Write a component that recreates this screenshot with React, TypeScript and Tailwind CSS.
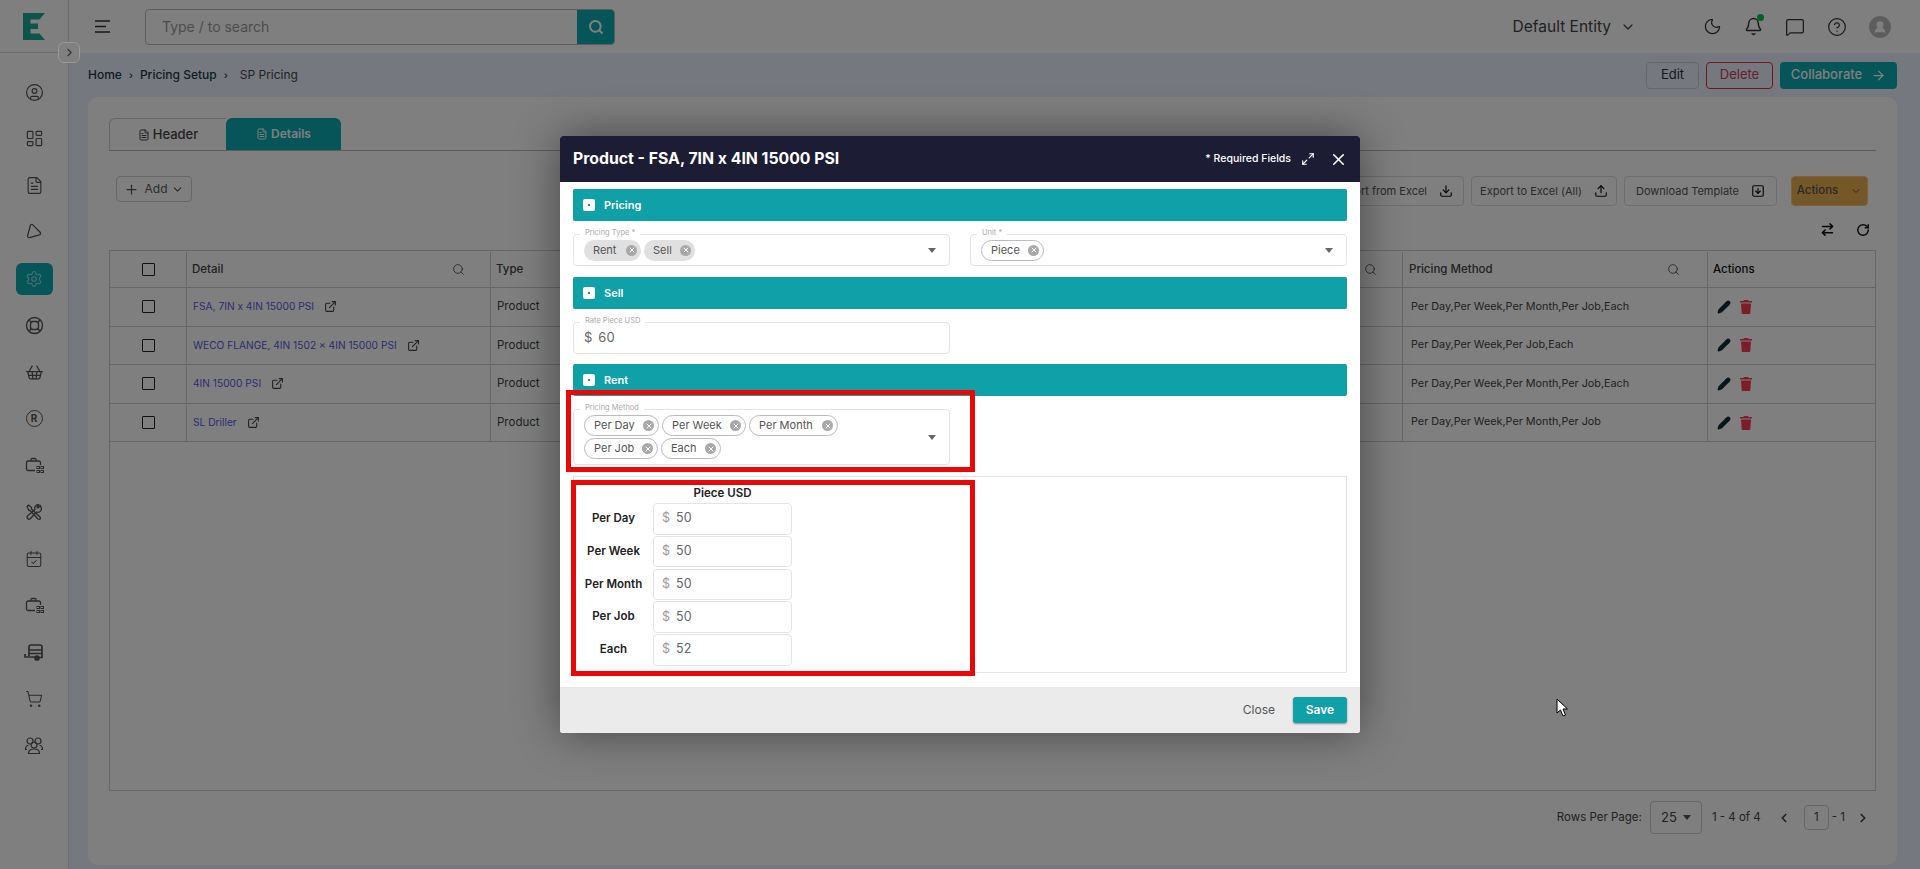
import React from 'react';
import {
  ArrowRightLeft, ArrowRight, Bell, CalendarCheck, ChevronDown, ChevronLeft, ChevronRight,
  CircleHelp, CircleUser, Download, ExternalLink, FileText, LayoutDashboard, Maximize2, MessageSquare,
  Moon, Play, Plus, RotateCw, Search, Settings, ShoppingBasket, ShoppingCart, SquareArrowDown, Pencil, Upload,
  X, UserRound,
} from 'lucide-react';

const BriefcaseGrid: React.FC = () => (
  <svg width="19" height="19" viewBox="0 0 19 19" fill="none" stroke="currentColor" strokeWidth="1.3">
    <path d="M10 14.500H3a1.500 1.500 0 0 1-1.500-1.500V6.500A1.500 1.500 0 0 1 3 5h11a1.500 1.500 0 0 1 1.500 1.500V9" />
    <path d="M6 5V3.500A1 1 0 0 1 7 2.500h3a1 1 0 0 1 1 1V5" />
    <rect x="12" y="10.500" width="2.500" height="2" strokeWidth="1" />
    <rect x="16" y="10.500" width="2.500" height="2" strokeWidth="1" />
    <rect x="12" y="14.500" width="2.500" height="2" strokeWidth="1" />
    <rect x="16" y="14.500" width="2.500" height="2" strokeWidth="1" />
  </svg>
);

const Tools: React.FC = () => (
  <svg width="18" height="18" viewBox="0 0 18 18" fill="none" stroke="currentColor" strokeWidth="1.3" strokeLinejoin="round">
    <path d="M2 3.500 3.500 2l3 2.500v1.500l8.500 8 .5 1.500-1 1-1.500-.5-8-8.500H4z" />
    <path d="M15.500 2.500 13 5l-1-1 2-2.200a3.500 3.500 0 0 0-4 4.700L2.500 13a2 2 0 0 0 2.500 3l6.500-7a3.500 3.500 0 0 0 4-5.500z" />
  </svg>
);

const Buoy: React.FC = () => (
  <svg width="19" height="19" viewBox="0 0 19 19" fill="none" stroke="currentColor" strokeWidth="1.4">
    <circle cx="9.500" cy="9.500" r="8" />
    <rect x="5.500" y="5.500" width="8" height="8" rx="2.500" />
    <path d="M4 4l2 2M15 4l-2 2M4 15l2-2M15 15l-2-2" />
  </svg>
);

const Trailer: React.FC = () => (
  <svg width="20" height="19" viewBox="0 0 20 19" fill="none" stroke="currentColor" strokeWidth="1.700">
    <path d="M5 13V4a2 2 0 0 1 2-2h9a2 2 0 0 1 2 2v10.500h-3" />
    <path d="M5 7h13M5 10.500h13" strokeWidth="1.400" />
    <path d="M1 11v3h10.500" />
    <circle cx="13" cy="15" r="2" fill="currentColor" />
  </svg>
);

const People: React.FC = () => (
  <svg width="20" height="19" viewBox="0 0 20 19" fill="none" stroke="currentColor" strokeWidth="1.200">
    <circle cx="6" cy="5" r="3" />
    <circle cx="14" cy="5" r="3" />
    <circle cx="10" cy="9" r="3" />
    <path d="M3 13.500H1.500c0-2.500 1-4 3-4.500M17 13.500h1.500c0-2.500-1-4-3-4.500" />
    <path d="M4.500 17.500c0-3 2-4.500 5.500-4.500s5.500 1.500 5.500 4.500z" />
  </svg>
);

const SolidTrash: React.FC = () => (
  <svg width="12" height="14" viewBox="0 0 12 14" fill="#f83c50">
    <path d="M4 0h4l.6 1H12v1.500H0V1h3.400zM1 3.500h10L10.300 13a1 1 0 0 1-1 1H2.700a1 1 0 0 1-1-1z" />
  </svg>
);

const sideIcons: React.ReactNode[] = [
  <CircleUser size={19} strokeWidth={1.5} />,
  <LayoutDashboard size={19} strokeWidth={1.5} />,
  <FileText size={19} strokeWidth={1.5} />,
  <Play size={18} strokeWidth={1.7} className="rotate-[15deg]" />,
  <Settings size={18} strokeWidth={1.5} />,
  <Buoy />,
  <ShoppingBasket size={19} strokeWidth={1.6} />,
  <span className="flex h-[17px] w-[17px] items-center justify-center rounded-full border-[1.5px] border-current text-[10px] font-bold">R</span>,
  <BriefcaseGrid />,
  <Tools />,
  <CalendarCheck size={18} strokeWidth={1.4} />,
  <BriefcaseGrid />,
  <Trailer />,
  <ShoppingCart size={18} strokeWidth={1.4} />,
  <People />,
];

const rows = [
  { detail: 'FSA, 7IN x 4IN 15000 PSI', method: 'Per Day,Per Week,Per Month,Per Job,Each' },
  { detail: 'WECO FLANGE, 4IN 1502 x 4IN 15000 PSI', method: 'Per Day,Per Week,Per Job,Each' },
  { detail: '4IN 15000 PSI', method: 'Per Day,Per Week,Per Month,Per Job,Each' },
  { detail: 'SL Driller', method: 'Per Day,Per Week,Per Month,Per Job' },
];

const gridCols = 'grid grid-cols-[77px_304px_300px_612px_305px_1fr]';

const Sidebar: React.FC = () => (
  <aside className="flex w-[69px] shrink-0 flex-col border-r border-[#dcdcdc] bg-white">
    <div className="flex h-[53px] items-center border-b border-[#dcdcdc] pl-[23px]">
      <svg width="22" height="27" viewBox="0 0 22 27">
        <path d="M0 0H22L16.500 6.500H7.500V10.500H15V16H7.500V20.500H16.500L22 27H0Z" fill="#1aa895" />
      </svg>
    </div>
    <div className="flex flex-col items-center pt-[23px]">
      {sideIcons.map((icon, i) => (
        <div
          key={i}
          className={`flex h-[32px] w-[37px] items-center justify-center rounded-md ${i === 4 ? 'bg-[#0caab0] text-[#8ee3e6]' : 'text-[#555]'} ${i === 14 ? '' : 'mb-[14.700px]'}`}
        >
          {icon}
        </div>
      ))}
    </div>
  </aside>
);

const Header: React.FC = () => (
  <header className="flex h-[53px] items-center bg-white pl-[26px] pr-[29px]">
    <svg width="15" height="13" viewBox="0 0 15 13" stroke="#333" strokeWidth="1.600">
      <path d="M0 1h15M0 6.500h11M0 12h15" />
    </svg>
    <div className="ml-[35px] flex h-[36px] w-[470px] items-center justify-between overflow-hidden rounded border border-[#bbb]">
      <span className="pl-4 text-[14px] text-[#999]">Type / to search</span>
      <span className="flex h-full w-[37px] items-center justify-center bg-[#0caab0] text-white">
        <Search size={16} strokeWidth={3} />
      </span>
    </div>
    <div className="ml-auto flex items-center gap-[9px] text-[15.500px] text-[#444]">
      Default Entity
      <ChevronDown size={16} />
    </div>
    <div className="ml-[67px] flex items-center gap-[22px] text-[#333]">
      <Moon size={19} strokeWidth={1.5} />
      <span className="relative">
        <Bell size={19} strokeWidth={1.8} />
        <span className="absolute right-[-1px] top-[-3px] h-[7px] w-[7px] rounded-full bg-[#11b84a]" />
      </span>
      <MessageSquare size={20} strokeWidth={1.5} />
      <CircleHelp size={20} strokeWidth={1.5} />
      <span className="flex h-[22px] w-[22px] items-center justify-center rounded-full bg-[#bbb] text-white">
        <UserRound size={14} fill="currentColor" />
      </span>
    </div>
  </header>
);

const ToolButton: React.FC<{ label: string; width: string; icon: React.ReactNode }> = ({ label, width, icon }) => (
  <button className={`flex h-[30px] items-center justify-center gap-3 rounded border border-[#ddd] text-[11px] text-[#555] ${width}`}>
    {label}
    {icon}
  </button>
);

const Breadcrumb: React.FC = () => (
  <div className="flex h-[44px] items-center justify-between pl-[19px] pr-[23px]">
    <div className="flex items-center gap-[7px] text-[12px] font-medium text-[#1b3a4a]">
      <span>Home</span>
      <span className="text-[10px]">›</span>
      <span>Pricing Setup</span>
      <span className="text-[10px]">›</span>
      <span className="ml-[5px] font-normal text-[#444]">SP Pricing</span>
    </div>
    <div className="flex items-center gap-[7px] text-[13px]">
      <button className="h-[27px] w-[53px] rounded border border-[#ccc] text-[#333]">Edit</button>
      <button className="h-[27px] w-[67px] rounded border border-[#e03030] text-[#c84058]">Delete</button>
      <button className="flex h-[27px] w-[117px] items-center justify-center gap-[9px] rounded bg-[#0caab0] font-medium text-white">
        Collaborate
        <ArrowRight size={15} />
      </button>
    </div>
  </div>
);

const DataTable: React.FC = () => (
  <div className="mx-[21px] mt-[44px] flex h-[541px] flex-col border border-[#ccc] text-[11.500px] text-[#444]">
    <div className={`${gridCols} h-[37px] border-b border-[#ccc] pt-[1px] font-medium`}>
      <div className="flex items-center justify-center border-r border-[#ccc]">
        <span className="h-[13px] w-[13px] rounded-[1px] border-[1.5px] border-[#222]" />
      </div>
      <div className="flex items-center justify-between border-r border-[#ccc] pl-[5px] pr-[25px]">
        Detail
        <Search size={13} strokeWidth={1.5} />
      </div>
      <div className="flex items-center pl-[5px]">Type</div>
      <div className="flex items-center justify-end border-r border-[#ccc] pr-[25px]">
        <Search size={13} strokeWidth={1.5} />
      </div>
      <div className="flex items-center justify-between border-r border-[#ccc] pl-[6px] pr-[27px]">
        Pricing Method
        <Search size={13} strokeWidth={1.5} />
      </div>
      <div className="flex items-center pl-[5px] text-[#111]">Actions</div>
    </div>
    {rows.map(row => (
      <div key={row.detail} className={`${gridCols} h-[38.600px] border-b border-[#ccc]`}>
        <div className="flex items-center justify-center border-r border-[#ccc]">
          <span className="h-[13px] w-[13px] rounded-[1px] border-[1.5px] border-[#222]" />
        </div>
        <div className="flex items-center gap-[10px] border-r border-[#ccc] pl-[6px] text-[10.200px] text-[#5a5ae0]">
          {row.detail}
          <ExternalLink size={13} className="text-[#444]" />
        </div>
        <div className="flex items-center pl-[6px]">Product</div>
        <div className="border-r border-[#ccc]" />
        <div className="flex items-center border-r border-[#ccc] pl-[8px] text-[10.800px]">{row.method}</div>
        <div className="flex items-center gap-[9px] pl-[9px]">
          <Pencil size={14} fill="#0d2a33" className="text-[#0d2a33]" />
          <SolidTrash />
        </div>
      </div>
    ))}
  </div>
);

const Pagination: React.FC = () => (
  <div className="flex items-center justify-end gap-[8px] pr-[27px] pt-[10px] text-[11.500px] text-[#444]">
    <span>Rows Per Page:</span>
    <span className="flex h-[33px] w-[52px] items-center justify-center gap-[6px] rounded border border-[#ccc] text-[13px]">
      25 <span className="h-0 w-0 border-x-4 border-t-[5px] border-x-transparent border-t-[#555]" />
    </span>
    <span className="ml-[2px]">1 - 4 of 4</span>
    <ChevronLeft size={14} strokeWidth={3} className="ml-[8px]" />
    <span className="ml-[5px] flex h-[25px] w-[25px] items-center justify-center rounded border border-[#ccc]">1</span>
    <span className="-ml-[5px]">- 1</span>
    <ChevronRight size={14} strokeWidth={3} className="ml-[3px]" />
  </div>
);

const Page: React.FC = () => (
  <main className="flex min-w-0 flex-1 flex-col bg-[#ecf0ff]">
    <Header />
    <Breadcrumb />
    <section className="ml-[19px] mr-[23px] h-[768px] rounded-[10px] bg-white pt-[21px]">
      <div className="mx-[21px] flex h-[33px] border-b border-[#bbb]">
        <div className="flex w-[117px] items-center justify-center gap-[3px] rounded-tl-md border-l border-t border-[#ccc] text-[13px] font-medium text-[#444]">
          <FileText size={12} /> Header
        </div>
        <div className="flex w-[115px] items-center justify-center gap-[3px] rounded-t-md bg-[#0caab0] text-[12px] font-semibold text-white">
          <FileText size={12} /> Details
        </div>
      </div>
      <div className="mt-[25px] flex h-[30px] items-start pl-[28px] pr-[29px]">
        <button className="flex h-[26px] w-[76px] items-center justify-center gap-[4px] rounded border border-[#ccc] text-[12px] text-[#555]">
          <Plus size={15} className="mr-[2px]" /> Add <ChevronDown size={13} />
        </button>
        <div className="ml-auto flex gap-[7px]">
          <ToolButton label="Import from Excel" width="w-[140px]" icon={<Download size={14} className="text-[#111]" />} />
          <ToolButton label="Export to Excel (All)" width="w-[146px]" icon={<Upload size={14} className="text-[#111]" />} />
          <ToolButton label="Download Template" width="w-[153px]" icon={<SquareArrowDown size={14} className="text-[#111]" />} />
          <button className="ml-[7px] flex h-[30px] w-[77px] items-center justify-center gap-3 rounded border border-[#ffc070] bg-[#e8b050] text-[11.500px] font-medium text-[#555]">
            Actions <ChevronDown size={12} />
          </button>
        </div>
      </div>
      <div className="absolute right-[50px] top-[222px] flex items-center gap-[21px] text-[#111]">
        <ArrowRightLeft size={15} strokeWidth={2.4} />
        <RotateCw size={14} strokeWidth={2.5} />
      </div>
      <DataTable />
      <Pagination />
    </section>
  </main>
);

const Section: React.FC<{ title: string }> = ({ title }) => (
  <div className="flex h-[32px] items-center gap-[9px] rounded-[2px] bg-[#0fa0a8] pl-[10px] text-[11px] font-semibold text-white">
    <span className="flex h-[12px] w-[12px] items-center justify-center rounded-[2px] bg-white">
      <span className="h-[2px] w-[2px] bg-[#0fa0a8]" />
    </span>
    {title}
  </div>
);

const Chip: React.FC<{ label: string; filled?: boolean; width: string }> = ({ label, filled, width }) => (
  <span className={`flex h-[21px] items-center justify-between rounded-full pl-[9px] pr-[4px] text-[11px] text-[#555] ${width} ${filled ? 'bg-[#e0e0e0]' : 'border border-[#bbb]'}`}>
    {label}
    <span className="flex h-[11px] w-[11px] items-center justify-center rounded-full bg-[#a8a8a8] text-white">
      <X size={8} strokeWidth={3} />
    </span>
  </span>
);

const Field: React.FC<{ label: string; height: string; children: React.ReactNode; arrow?: boolean }> = ({ label, height, children, arrow }) => (
  <div className={`relative flex items-center rounded border border-[#e4e4e4] pl-[10px] pr-[13px] ${height}`}>
    <span className="absolute left-[6px] top-[-7px] bg-white px-[5px] text-[7.500px] leading-[9px] text-[#aaa]">{label}</span>
    <div className="flex max-w-[300px] flex-1 flex-wrap gap-x-[3px] gap-y-[2px]">{children}</div>
    {arrow && <span className="ml-auto h-0 w-0 border-x-[4px] border-t-[5px] border-x-transparent border-t-[#666]" />}
  </div>
);

const priceRows = [
  { label: 'Per Day', value: '50' },
  { label: 'Per Week', value: '50' },
  { label: 'Per Month', value: '50' },
  { label: 'Per Job', value: '50' },
  { label: 'Each', value: '52' },
];

const Modal: React.FC = () => (
  <div className="absolute left-[560px] top-[136px] flex h-[597px] w-[800px] flex-col overflow-hidden rounded-[3px] bg-white shadow-[0_0_45px_rgba(0,0,0,0.45)]">
    <div className="flex h-[46px] shrink-0 items-center bg-[#1c1c34] pl-[13px] pr-[12px] text-white">
      <span className="text-[15.800px] font-bold">Product - FSA, 7IN x 4IN 15000 PSI</span>
      <span className="ml-auto text-[10.500px] font-medium">* Required Fields</span>
      <Maximize2 size={14} className="ml-[10px]" />
      <X size={19} className="ml-[14px]" />
    </div>
    <div className="flex flex-1 flex-col px-[13px] pt-[7px]">
      <Section title="Pricing" />
      <div className="mt-[13px] grid h-[32px] grid-cols-[377px_377px] gap-x-[20px]">
        <Field label="Pricing Type *" height="h-[32px]" arrow>
          <Chip label="Rent" filled width="w-[57px]" />
          <Chip label="Sell" filled width="w-[51px]" />
        </Field>
        <Field label="Unit *" height="h-[32px]" arrow>
          <Chip label="Piece" width="w-[63px]" />
        </Field>
      </div>
      <div className="mt-[11px]"><Section title="Sell" /></div>
      <div className="mt-[13px] w-[377px]">
        <Field label="Rate Piece USD" height="h-[32px]">
          <span className="flex gap-[6px] text-[13px] text-[#666]"><span>$</span>60</span>
        </Field>
      </div>
      <div className="mt-[10px]"><Section title="Rent" /></div>
      <div className="mt-[13px] w-[377px]">
        <Field label="Pricing Method" height="h-[56px]" arrow>
          <Chip label="Per Day" width="w-[75px]" />
          <Chip label="Per Week" width="w-[84px]" />
          <Chip label="Per Month" width="w-[89px]" />
          <Chip label="Per Job" width="w-[74px]" />
          <Chip label="Each" width="w-[60px]" />
        </Field>
      </div>
      <div className="mt-[11px] h-[197px] border border-[#e2e2ea] pt-[9px]">
        <div className="ml-[79px] w-[139px] text-center text-[11.500px] font-semibold leading-[15px] text-[#222]">Piece USD</div>
        <div className="mt-[2px] flex flex-col gap-[1.250px]">
          {priceRows.map(row => (
            <div key={row.label} className="flex items-center">
              <span className="w-[79px] text-center text-[11.500px] font-semibold text-[#222]">{row.label}</span>
              <span className="flex h-[31.500px] w-[139px] items-center gap-[6px] rounded border border-[#e4e4e4] pl-[8px] text-[12.500px] text-[#666]">
                <span className="text-[#999]">$</span>{row.value}
              </span>
            </div>
          ))}
        </div>
      </div>
    </div>
    <div className="flex h-[46px] shrink-0 items-center justify-end bg-[#ebebeb] pb-[1px] pr-[13px] text-[12px]">
      <button className="mr-[18px] text-[#555]">Close</button>
      <button className="h-[26px] w-[54px] rounded-[3px] bg-[#0fa0a8] font-semibold text-white shadow-[0_1px_2px_rgba(0,0,0,0.4)]">Save</button>
    </div>
    {/* red boxes the author of the screenshot drew over the form */}
    <div className="absolute left-[6px] top-[254px] h-[82px] w-[409px] border-[5px] border-[#e80808]" />
    <div className="absolute left-[11px] top-[344px] h-[196px] w-[404px] border-[5px] border-[#e80808]" />
  </div>
);

const App: React.FC = () => (
  <div className="relative flex h-[869px] w-[1920px] overflow-hidden font-['Inter','Noto_Sans',sans-serif]">
    <Sidebar />
    <Page />
    <div className="absolute inset-0 bg-black/50" />
    <button className="absolute left-[58px] top-[42px] flex h-[21px] w-[22px] items-center justify-center rounded-md border border-[#999] bg-[#808080] text-[#333]">
      <ChevronRight size={13} />
    </button>
    <Modal />
    <svg className="absolute left-[1556px] top-[698px]" width="13" height="20" viewBox="0 0 13 20">
      <path d="M1 1V15L4.500 12 7 18 9.500 17 7 11H11.500Z" fill="#fff" stroke="#000" />
    </svg>
  </div>
);

export default App;
